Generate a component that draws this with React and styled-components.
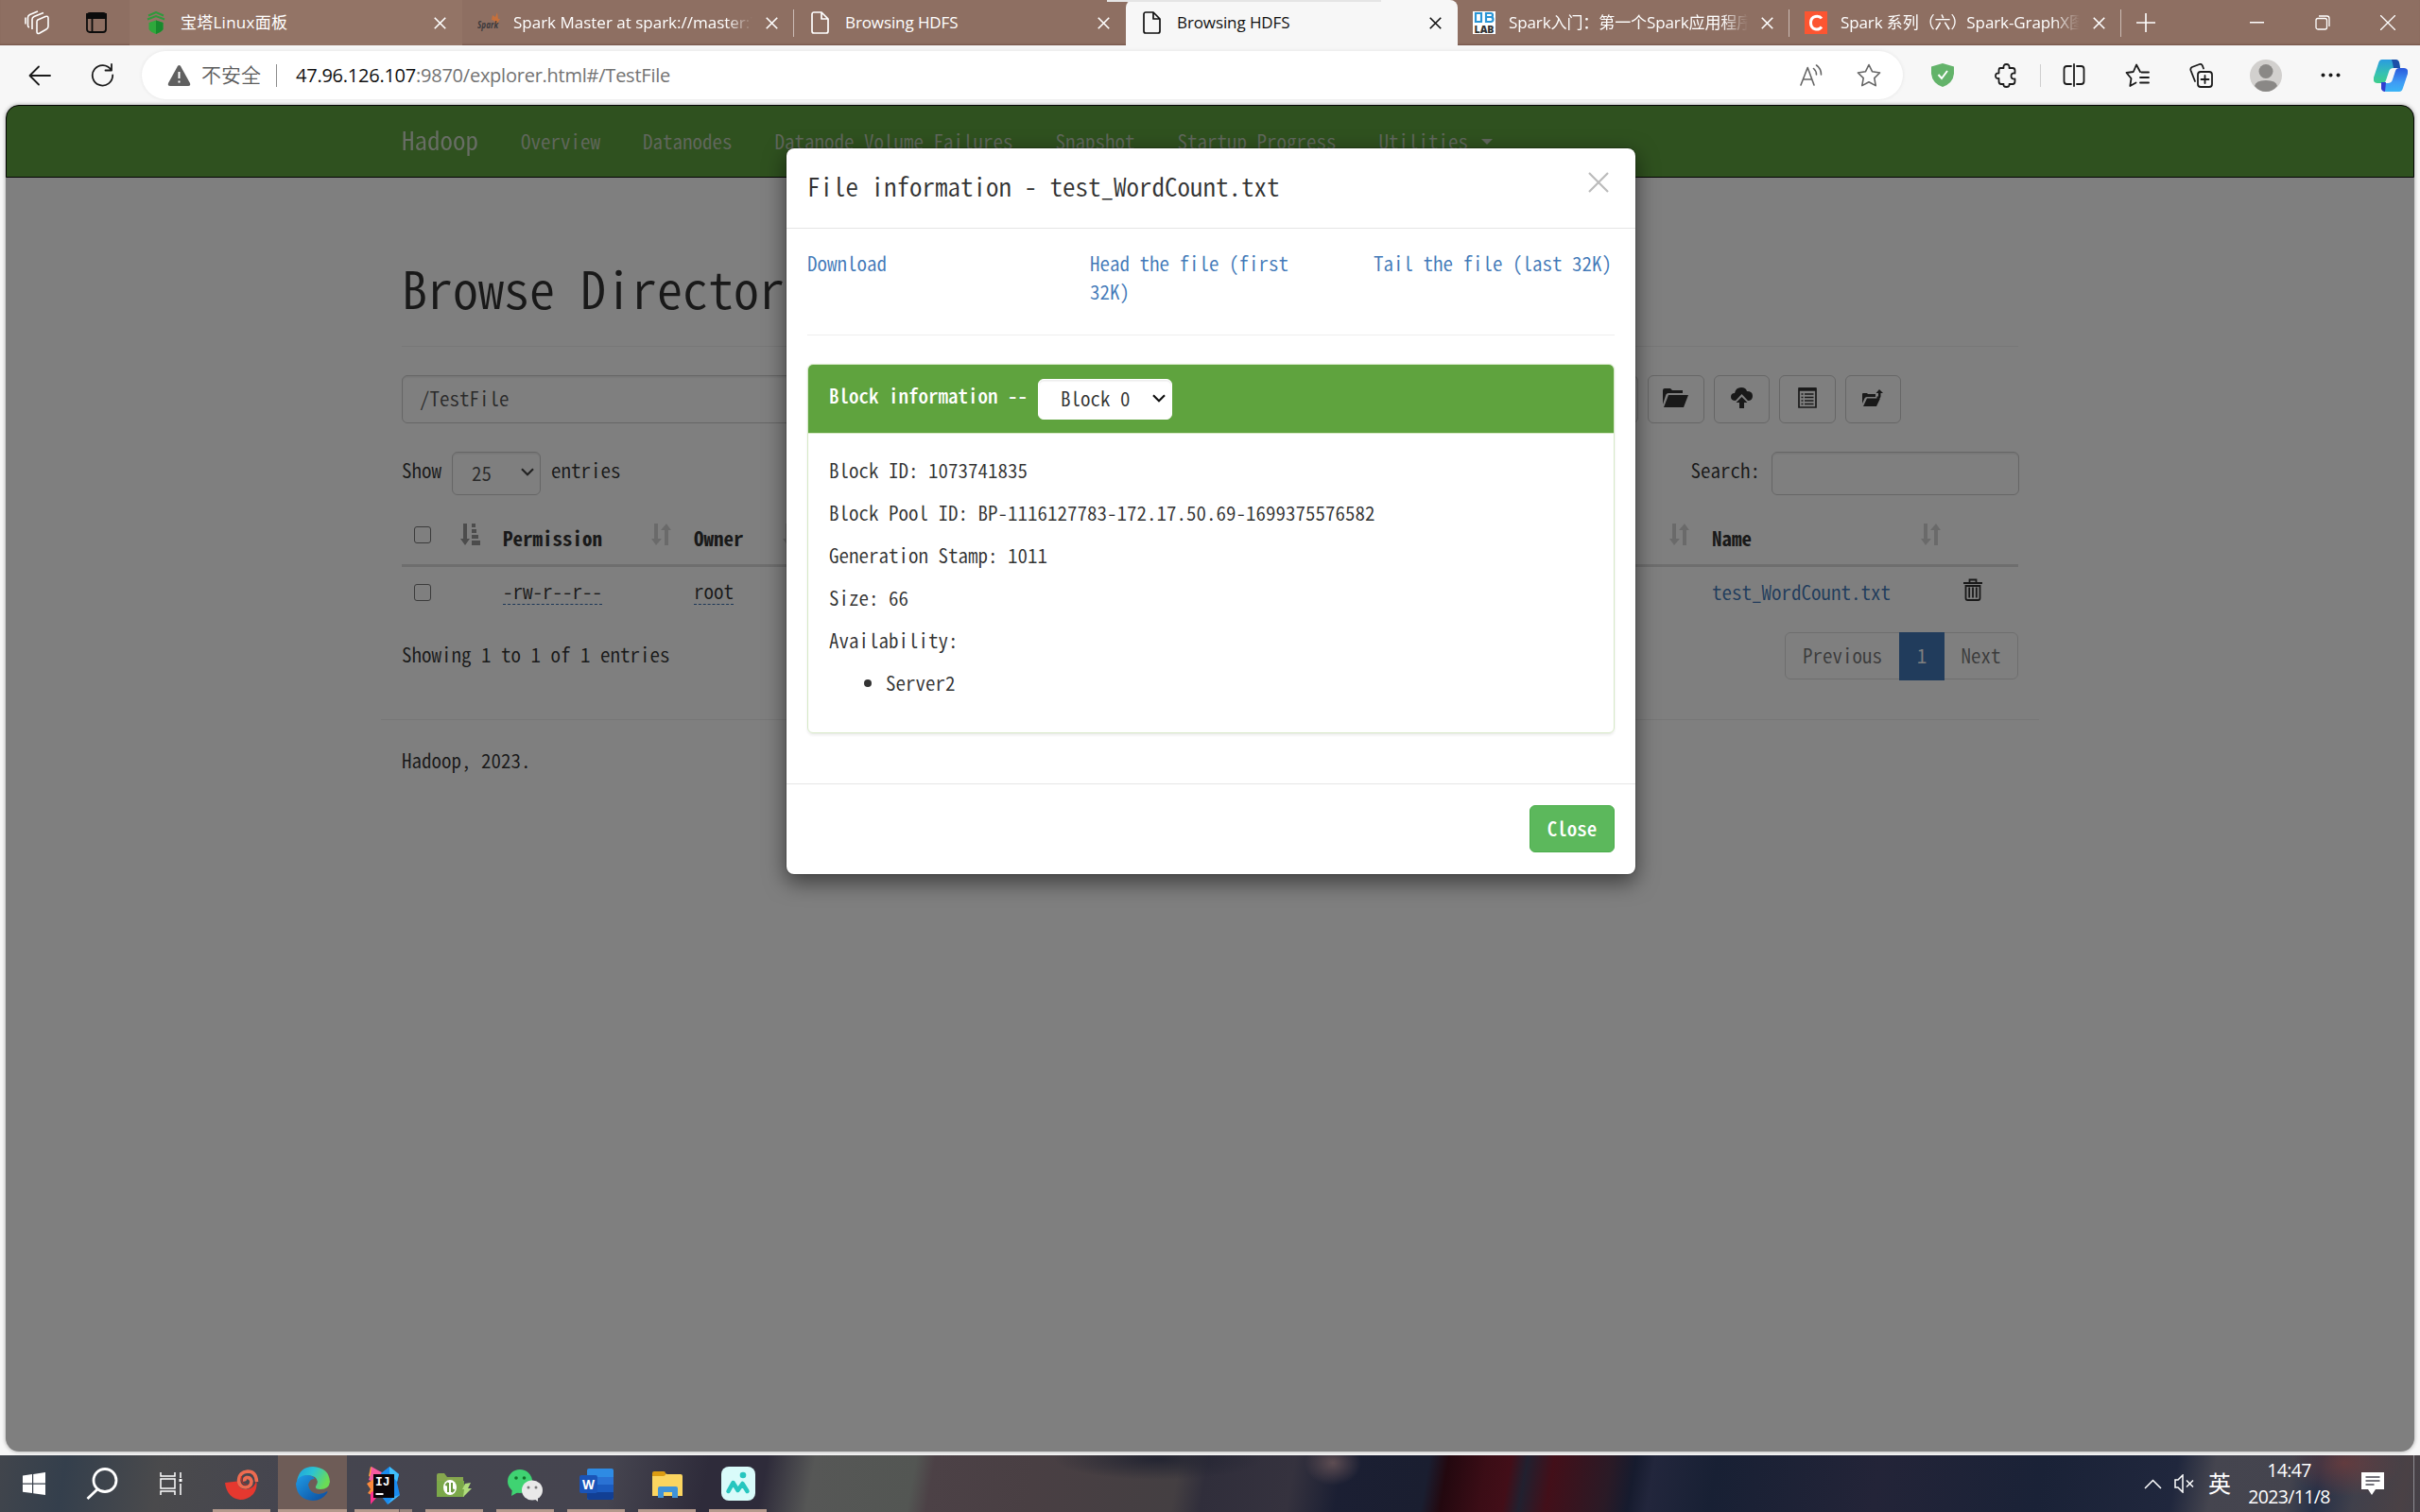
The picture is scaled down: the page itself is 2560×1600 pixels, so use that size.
import React from 'react';
import styled, { createGlobalStyle, css } from 'styled-components';

const Global = createGlobalStyle`
  * { box-sizing: border-box; }
  html, body { margin: 0; padding: 0; background: #f7f7f7; }
  #root { width: 2560px; height: 1600px; overflow: hidden; }
`;

const uiFont = css`font-family: "Open Sans", "Noto Sans CJK SC", sans-serif;`;

const Screen = styled.div`
  width: 2560px; height: 1600px; display: flex; flex-direction: column; overflow: hidden;
  ${uiFont}
`;

/* ---------- tab strip ---------- */
const TabStrip = styled.div`
  height: 48px; flex: none; display: flex; align-items: stretch; background: #8e6f62; color: #fff;
  position: relative; box-shadow: inset 0 -2px 2px -1px rgba(70,30,20,.35);
`;
const StripButton = styled.div`
  width: ${p => p.$w}px; display: flex; align-items: center; justify-content: center;
  padding-right: ${p => p.$pr || 0}px;
`;
const Tab = styled.div`
  width: ${p => p.$w || 351}px; flex: none; display: flex; align-items: center; padding: 0 17px 0 16px; position: relative;
  background: ${p => (p.$active ? '#f7f7f7' : p.$light ? '#937466' : 'transparent')};
  color: ${p => (p.$active ? '#111' : '#fff')};
  border-radius: ${p => (p.$active ? '8px 8px 0 0' : '0')};
`;
const TabIcon = styled.div`width: 24px; height: 26px; margin-right: 14px; flex: none; display: flex; align-items: center; justify-content: center;`;
const TabTitle = styled.div`
  width: 253px; flex: none; font-size: 17px; letter-spacing: ${p => p.$ls ?? -0.1}px; white-space: nowrap; overflow: hidden; line-height: 28px;
  ${p => p.$fade && css`mask-image: linear-gradient(90deg, #000 calc(100% - 28px), transparent);`}
`;
const TabClose = styled.svg`margin-left: auto; flex: none;`;
const Divider = styled.div`width: 1px; height: ${p => p.$h}px; background: ${p => p.$c}; flex: none; align-self: center;`;
const TabDivider = styled(Divider)`position: absolute; right: 0; top: 10px;`;
const LoadHint = styled.div`position: absolute; left: 1171px; top: 0; width: 290px; height: 2px; background: #e5e5e5;`;
const WindowButtons = styled.div`margin-left: auto; display: flex;`;

/* ---------- address bar ---------- */
const Toolbar = styled.div`
  height: 63px; flex: none; background: #f7f7f7; display: flex; align-items: center; position: relative;
`;
const ToolButton = styled.div`width: ${p => p.$w}px; flex: none; display: flex; align-items: center; justify-content: center;`;
const AddressPill = styled.div`
  width: 1863px; height: 51px; flex: none; background: #fff; border-radius: 26px; display: flex; align-items: center;
  padding: 0 3px 0 27px; box-shadow: 0 0 4px rgba(0,0,0,.08);
`;
const Insecure = styled.span`font-family: "Noto Sans CJK SC", sans-serif; font-weight: 350; font-size: 21px; color: #5c5c5c; margin: 0 16px 0 11px; line-height: 28px; padding-bottom: 3px;`;
const Url = styled.span`font-size: 20px; letter-spacing: -0.24px; color: #737373; margin-left: 20px; flex: 1; line-height: 30px; b { font-weight: 400; color: #111; }`;

/* ---------- page ---------- */
const PageFrame = styled.div`height: 1429px; flex: none; padding: 0 6px 4px; background: #f7f7f7;`;
const Viewport = styled.div`
  height: 1425px; border-radius: 14px; overflow: hidden; position: relative; background: #fff;
  font-family: "Noto Sans CJK JP", monospace; font-feature-settings: "hwid"; font-variant-ligatures: none; font-weight: 350;
  font-size: 21px; line-height: 30px; color: #333;
  box-shadow: 0 0 4px rgba(0,0,0,.35);
`;
const NavBar = styled.nav`
  height: 77px; background: #5fa33e; border: 1.5px solid #080808; border-radius: 14px 14px 0 0;
  display: flex; align-items: center; padding: 0 0 4px 418px; color: #d2d2d2;
`;
const Brand = styled.span`font-size: 27px; margin-right: 45px; color: #e4e4e4; opacity: .85;`;
const NavItem = styled.span`margin-right: 45px; display: flex; align-items: center; gap: 14px; color: #c3cfbc; padding-top: 2px;`;
const Caret = styled.i`border: 6px solid transparent; border-top-color: currentColor; border-bottom: 0; margin-top: 3px;`;

const Container = styled.main`width: 1710px; margin: 0 auto; display: flex; flex-direction: column;`;
const PageTitle = styled.h1`
  font-size: 54px; font-weight: inherit; line-height: 60px; margin: 86px 0 0; padding-bottom: 32px;
  border-bottom: 1.5px solid #eee; box-sizing: content-box; height: 60px; color: #333;
`;
const PathRow = styled.div`display: flex; gap: 10px; margin-top: 30px;`;
const inputBox = css`border: 1.5px solid #ccc; border-radius: 6px; background: #fff; box-shadow: inset 0 1.5px 1.5px rgba(0,0,0,.08); color: #555;`;
const PathInput = styled.div`${inputBox} width: 1308px; height: 51px; padding: 0 18px; line-height: 46px;`;
const IconButton = styled.button`
  width: 59.5px; height: 51px; padding: 0 0 3px; border: 1.5px solid #ccc; border-radius: 6px; background: #fff; display: flex; align-items: center; justify-content: center; color: #333;
`;
const ControlsRow = styled.div`display: flex; justify-content: space-between; margin-top: 30px; height: 46px;`;
const Control = styled.div`display: flex; gap: ${p => p.$gap}px; line-height: 38px; margin-right: -1px;`;
const SelectBox = styled.div`
  ${inputBox} width: ${p => p.$w}px; height: ${p => p.$h}px; padding: 0 6px 3px ${p => p.$pl}px; display: flex; align-items: center; justify-content: space-between;
  border-color: ${p => p.$bc || '#ccc'}; color: ${p => p.$c || '#555'}; font-weight: 350;
`;
const SearchInput = styled.div`${inputBox} width: 262px; height: 46px;`;

const columns = css`display: grid; grid-template-columns: 50px 45px 202px 139px 1fr 266px 70px;`;
const HeadRow = styled.div`${columns} height: 76px; border-bottom: 3px solid #ddd; font-weight: 700; padding-top: 20px;`;
const BodyRow = styled.div`${columns} height: 56px; padding-top: 12px;`;
const Cell = styled.div`padding: 0 12px; display: flex; justify-content: space-between; align-items: flex-start;`;
const HeadLabel = styled.span`padding-top: 10px;`;
const Sort = styled.svg`margin: 10px 0 0 auto; flex: none; opacity: ${p => (p.$on ? 0.5 : 0.2)};`;
const CheckBox = styled.i`width: 18px; height: 18px; border: 1.5px solid #767676; border-radius: 3px; margin: ${p => p.$mt}px 0 0 1px;`;
const Editable = styled.span`border-bottom: 1.5px dashed #3a6fae; line-height: 23px; padding-bottom: 2px; margin-top: 2px;`;
const FileLink = styled.span`color: #4279b8; margin-top: -1px;`;
const FootRow = styled.div`display: flex; justify-content: space-between; height: 105px; padding-top: 13px;`;
const Pager = styled.div`display: flex; height: 50px; border: 1.5px solid #ddd; border-radius: 6px; color: #777; line-height: 46px;`;
const PageCell = styled.span`
  width: ${p => p.$w}px; text-align: center;
  ${p => p.$on && css`background: #4279b8; color: #fff; margin: -1.5px 0; line-height: 49px;`}
`;
const Rule = styled.hr`border: 0; border-top: 1.5px solid #eee; margin: 0 ${p => p.$out || 0}px; width: auto;`;
const Copyright = styled.p`margin: 27px 0 0;`;
const Info = styled.span`padding-top: 8px;`;

/* ---------- modal ---------- */
const Backdrop = styled.div`position: absolute; inset: 0; background: rgba(0,0,0,.5);`;
const Modal = styled.section`
  position: absolute; left: 825px; top: 45px; width: 900px; height: 770px; background: #fff; background-clip: padding-box;
  border: 1.5px solid rgba(0,0,0,.2); border-radius: 9px; box-shadow: 0 7.5px 22.5px rgba(0,0,0,.5); display: flex; flex-direction: column;
`;
const ModalHead = styled.header`height: 85px; border-bottom: 1.5px solid #e5e5e5; padding: 21px 28px 0 22px; display: flex; justify-content: space-between; font-size: 27px; line-height: 38px;`;
const ModalClose = styled.svg`margin-top: 4px;`;
const ModalBody = styled.div`padding: 21px 22px 0; height: 587px;`;
const Links = styled.div`display: grid; grid-template-columns: 299px 300px 1fr; height: 91px; color: #4279b8;
  span:nth-child(2) { padding-right: 60px; } span:nth-child(3) { white-space: nowrap; }`;
const Panel = styled.div`margin-top: 30px; height: 391px; border: 1.5px solid #d6e9c6; border-radius: 6px; box-shadow: 0 1.5px 3px rgba(0,0,0,.08); overflow: hidden;`;
const PanelHead = styled.div`height: 73px; background: #5fa33e; border-bottom: 1.5px solid #d6e9c6; display: flex; gap: 11px; padding: 15px 22px 0; color: #fff; font-weight: 500; line-height: 35px;`;
const PanelBody = styled.div`padding: 23px 22px 0; display: flex; flex-direction: column; gap: 15px; p { margin: 0; }`;
const Servers = styled.ul`margin: 0; padding-left: 60px;`;
const ModalFoot = styled.footer`flex: 1; border-top: 1.5px solid #e5e5e5; display: flex; justify-content: flex-end; padding: 22px 22px 0;`;
const CloseButton = styled.button`
  width: 90px; height: 50px; border: 1.5px solid #4cae4c; border-radius: 6px; background: #5cb85c; color: #fff; padding: 0 0 3px;
  font: inherit; font-weight: 500; font-feature-settings: "hwid";
`;

/* ---------- taskbar ---------- */
const TaskBar = styled.div`
  height: 60px; flex: none; display: flex; color: #fff; overflow: hidden;
  background:
    radial-gradient(ellipse 30px 24px at 1410px 8px, rgba(120,95,95,.7), transparent),
    radial-gradient(ellipse 110px 22px at 1225px 4px, rgba(32,34,48,.9), transparent),
    radial-gradient(ellipse 60px 36px at 2480px 8px, rgba(110,60,60,.8), transparent),
    linear-gradient(100deg, #41454c 0, #343f4c 70px, #4a4a4c 170px, #45454f 300px, #45444f 640px, #2e2b3a 740px, #2e2b3a 800px, #565756 850px, #535653 955px,
      #4c4146 975px, #493f43 1080px, #443f42 1230px, #302e3b 1260px, #35323e 1350px, #1b1f33 1400px, #1a1e30 1490px, #23080f 1510px, #3b0d16 1550px, #420e18 1575px,
      #21202f 1592px, #430f19 1620px, #2a1a26 1680px, #161b2e 1705px, #22263c 1725px, #182034 1790px, #232438 1960px, #1a2237 2130px, #20273d 2270px, #45454f 2310px, #44444e 2390px, #263047 2420px, #40404b 2460px, #4a4145 2510px, #3d404b 2560px);
`;
const TaskItem = styled.div`
  width: ${p => p.$w || 75}px; flex: none; display: flex; flex-direction: column; align-items: center; position: relative;
  svg { margin-top: ${p => p.$mt ?? 12}px; }
`;
const Hilite = styled.div`width: 73px; height: 60px; background: #6e5c57; display: flex; flex-direction: column; align-items: center;`;
const Running = styled.i`width: ${p => p.$w || 61}px; height: 3px; margin-top: auto; flex: none; background: ${p => p.$bg || '#b4998c'};`;
const Tray = styled.div`margin-left: auto; display: flex; align-items: center;`;
const Ime = styled.span`font-family: "Noto Sans CJK SC", sans-serif; font-size: 24px; line-height: 28px; margin: 0 13px 2px 13px;`;
const Clock = styled.div`width: 97px; text-align: center; font-size: 19.5px; line-height: 28px; letter-spacing: -0.65px; white-space: nowrap; padding-bottom: 1px;`;
const DeskEdge = styled.i`width: 1px; height: 60px; background: #8c8c92; margin: 0 6px 0 30px;`;

const X = () => (
  <TabClose width="13" height="13" viewBox="0 0 12 12" stroke="currentColor" strokeWidth="1.5"><path d="M.7.7l10.6 10.6M11.3.7L.7 11.3" /></TabClose>
);
const PageGlyph = () => (
  <svg width="20" height="24" viewBox="0 0 20 24" fill="none" stroke="currentColor" strokeWidth="1.7" strokeLinejoin="round"><path d="M3 1h8l7 7v13a2 2 0 0 1-2 2H3a2 2 0 0 1-2-2V3a2 2 0 0 1 2-2zM11 1v7h7" /></svg>
);
const Chevron = ({ c = '#333' }) => (
  <svg width="14" height="9" viewBox="0 0 14 9" fill="none" stroke={c} strokeWidth="2.2"><path d="M1 1.2l6 6 6-6" /></svg>
);
const SortBoth = () => (
  <Sort width="21" height="23" viewBox="0 0 21 23" fill="#333"><path d="M3 0h4v16h4l-6 7-5-7h3zM14 23h4V7h3l-5-7-6 7h4z" /></Sort>
);

const tabs = [
  { w: 352, light: true, ls: 0.25, title: '宝塔Linux面板', icon: <svg width="20" height="24" viewBox="0 0 20 24"><path d="M2.500 12l7.500-2.500 7.500 2.500v7c-1 2-5 4-7.500 5-3-1-6.500-3-7.500-5z" fill="#2fa83c" /><path d="M10 9.500l7.500 2.500v7c-1 2-5 4-7.500 5z" fill="#178a2d" /><path d="M2 4.500l8-3.500 8 3.500M1 8.500l9-3.500 9 3.500" stroke="#2f9a3c" strokeWidth="2" fill="none" /></svg> },
  { title: 'Spark Master at spark://master:7077', ls: 0, fade: true, line: true, icon: <svg width="24" height="24" viewBox="0 0 24 24"><path d="M15 9l1-5 3 2 2-5 1 7 2 0-4 6-2-4z" fill="#d8702f" opacity=".75" /><text x="0" y="18" fontSize="11" fontWeight="700" fontStyle="italic" fontFamily="Open Sans" fill="#3c3a3d" textLength="22" lengthAdjust="spacingAndGlyphs">Spark</text></svg> },
  { title: 'Browsing HDFS', icon: <PageGlyph /> },
  { title: 'Browsing HDFS', active: true, icon: <PageGlyph /> },
  { title: 'Spark入门：第一个Spark应用程序', fade: true, line: true, icon: <svg width="24" height="24" viewBox="0 0 24 24"><rect width="24" height="24" fill="#fff" /><path d="M3 2h6v9M3 1v10h7M14 2h5q2 0 2 2t-2 2h-5M19 6.200q2.500 0 2.500 2.300T19 11h-5V1" fill="none" stroke="#2a95d5" strokeWidth="2.200" /><text x="1.500" y="22.500" fontSize="10" fontWeight="800" fontFamily="Open Sans" fill="#333" textLength="21" lengthAdjust="spacingAndGlyphs">LAB</text></svg> },
  { title: 'Spark 系列（六）Spark-GraphX图计算', fade: true, line: true, icon: <svg width="24" height="24" viewBox="0 0 24 24"><rect width="24" height="24" fill="#fc5531" /><path d="M18 7.500C15.500 4 6.500 4 6.500 12s8.500 8.500 11.500 4.500" stroke="#fff" strokeWidth="3" fill="none" /></svg> },
];

const s = { fill: 'none', stroke: '#1b1b1b', strokeWidth: 1.8, strokeLinejoin: 'round', strokeLinecap: 'round' };

export default function App() {
  return (
    <Screen>
      <Global />
      <TabStrip>
        <StripButton $w={78} $pr={1}><svg width="26" height="26" viewBox="0 0 26 26" fill="none" stroke="#fff" strokeWidth="1.6" strokeLinejoin="round"><path d="M14 10l8-3.500q3-1 3 1.500v9q0 2-2 3l-7 4q-3 1.500-3-1.500V12q0-1.300 1-2zM8 20V9.500q0-2 2-3L20 2.500M5 18q-1.500-.5-1.500-2V7.500q0-2 2-3L14 1M1 14.500V7.500" /></svg></StripButton>
        <StripButton $w={59} $pr={11}><svg width="22" height="22" viewBox="0 0 22 22" fill="none" stroke="#0c0c0c" strokeWidth="1.8"><rect x="1" y="1" width="20" height="20" rx="3" /><path d="M1 2h20v4H1z" fill="#0c0c0c" /><path d="M6.500 6v15" /></svg></StripButton>
        {tabs.map((t, i) => (
          <Tab key={i} $w={t.w} $active={t.active} $light={t.light}>
            <TabIcon>{t.icon}</TabIcon>
            <TabTitle $fade={t.fade} $ls={t.ls}>{t.title}</TabTitle>
            <X />
            {t.line && <TabDivider $h={29} $c="#cbbcb5" />}
          </Tab>
        ))}
        <StripButton $w={54} $pr={3}><svg width="20" height="20" viewBox="0 0 20 20" stroke="#fff" strokeWidth="1.6"><path d="M10 0v20M0 10h20" /></svg></StripButton>
        <WindowButtons>
          <StripButton $w={69}><svg width="15" height="2"><rect width="15" height="1.500" fill="#fff" /></svg></StripButton>
          <StripButton $w={69}><svg width="16" height="16" viewBox="0 0 16 16" fill="none" stroke="#fff" strokeWidth="1.3"><rect x="1" y="3.500" width="11.500" height="11.500" rx="2" /><path d="M4 1h8.500Q15 1 15 3.500V12" /></svg></StripButton>
          <StripButton $w={69}><svg width="16" height="16" viewBox="0 0 16 16" stroke="#fff" strokeWidth="1.3"><path d="M0 0l16 16M16 0L0 16" /></svg></StripButton>
        </WindowButtons>
        <LoadHint />
      </TabStrip>

      <Toolbar>
        <ToolButton $w={84}><svg width="24" height="22" viewBox="0 0 24 22" {...s}><path d="M23 11H1.500M11 1.500L1.500 11l9.500 9.500" /></svg></ToolButton>
        <ToolButton $w={48}><svg width="25" height="25" viewBox="0 0 25 25" {...s}><path d="M21.500 7A10.700 10.700 0 1 0 23.200 12.500M22 1v6.500h-6.500" /></svg></ToolButton>
        <ToolButton $w={18} />
        <AddressPill>
          <svg width="25" height="24" viewBox="0 0 25 24"><path d="M12.500 1q1 0 1.700 1.200L24 20q1 3-2 3H3q-3 0-2-3L10.800 2.200Q11.500 1 12.500 1z" fill="#606060" /><path d="M12.500 8v7M12.500 17.500v2" stroke="#fff" strokeWidth="2" /></svg>
          <Insecure>不安全</Insecure>
          <Divider $h={24} $c="#8c8c8c" />
          <Url><b>47.96.126.107</b>:9870/explorer.html#/TestFile</Url>
          <ToolButton $w={56}><svg width="25" height="24" viewBox="0 0 25 24" {...s} stroke="#666" strokeWidth="1.600"><path d="M1 22L8.200 3.500 15 22M3.500 16h9M14.500 4.500q3 2.500 3 6.500M17.500 1q5 3.500 5 10" /></svg></ToolButton>
          <ToolButton $w={66}><svg width="26" height="25" viewBox="0 0 26 25" {...s} stroke="#666" strokeWidth="1.600"><path d="M13 1.500l3.600 7.300 8 1.200-5.800 5.600 1.400 8L13 19.800l-7.200 3.800 1.400-8L1.400 10l8-1.200z" /></svg></ToolButton>
        </AddressPill>
        <ToolButton $w={84}><svg width="24" height="25" viewBox="0 0 24 25"><path d="M12 0l12 3.500V11q-1 10-12 14Q1 21 0 11V3.500z" fill="#63b36a" /><path d="M7.500 12l3.500 4 6-8" stroke="#fff" strokeWidth="2" fill="none" /></svg></ToolButton>
        <ToolButton $w={51}><svg width="25" height="26" viewBox="0 0 25 26" {...s}><path d="M6 5h3.500q-.5-4 3-4t3 4H19q2.500 0 2.500 2.500V10.500q-4-.5-4 3t4 3V19q0 3-2.500 3h-3.500q.5 3-3 3t-3-3H7Q4.500 22 4.500 19v-3q-3.500.5-3.500-2.700t3.500-2.800V7.500Q4.500 5 6 5z" /></svg></ToolButton>
        <ToolButton $w={21}><Divider $h={24} $c="#cfcfcf" /></ToolButton>
        <ToolButton $w={49}><svg width="24" height="25" viewBox="0 0 24 25" {...s}><path d="M9 3H4.500Q1.500 3 1.500 6v13q0 3 3 3H9M15 3h4.500q3 0 3 3v13q0 3-3 3H15M12 1v23" /></svg></ToolButton>
        <ToolButton $w={86}><svg width="26" height="26" viewBox="0 0 26 26" {...s}><path d="M16 9l-4-7.500L8.800 9 1.500 10l5 6-1.200 8 6.200-3.500M17.500 9.500h7.500M16 15h9M16 20.500h9" /></svg></ToolButton>
        <ToolButton $w={48}><svg width="25" height="26" viewBox="0 0 25 26" {...s}><rect x="9" y="9" width="15" height="16" rx="3" /><path d="M16.500 13v8M12.500 17h8M6 19L1.500 7.500q-.7-2.500 1.300-3.500l8-3q2-.7 3 1.300L15 5.500" /></svg></ToolButton>
        <ToolButton $w={90}><svg width="34" height="34" viewBox="0 0 34 34"><circle cx="17" cy="17" r="17" fill="#d2d0ce" /><circle cx="17" cy="12.500" r="7.500" fill="#8a8886" /><path d="M5 28q1-6 12-6t12 6q-5 6-12 6T5 28z" fill="#8a8886" /></svg></ToolButton>
        <ToolButton $w={47}><svg width="22" height="5" fill="#1b1b1b"><circle cx="2.500" cy="2.500" r="2" /><circle cx="10.500" cy="2.500" r="2" /><circle cx="18.500" cy="2.500" r="2" /></svg></ToolButton>
        <ToolButton $w={80}><svg width="36" height="34" viewBox="0 0 36 34">
          <defs>
            <linearGradient id="ca" x1="0" y1="0" x2="0" y2="1"><stop offset="0" stopColor="#2a9be0" /><stop offset=".6" stopColor="#36c2b0" /><stop offset="1" stopColor="#3fce8c" /></linearGradient>
            <linearGradient id="cb" x1="0" y1="0" x2="0" y2="1"><stop offset="0" stopColor="#2a58dc" /><stop offset=".6" stopColor="#3f9bf5" /><stop offset="1" stopColor="#3ab4f5" /></linearGradient>
          </defs>
          <path d="M9 0h14q3 0 4 3l1 6h-7q-4 0-5 4l-3 9q-1 3-4 3H4q-5 0-4-6L5 4q1-4 4-4z" fill="url(#ca)" />
          <path d="M27 34H13q-3 0-4-3l-1-6h7q4 0 5-4l3-9q1-3 4-3h5q5 0 4 6l-5 15q-1 4-4 4z" fill="url(#cb)" />
          <path d="M19 0h4q3 0 4 3l1 6h-7q-1-6-2-9z" fill="#1b4fa8" />
          <path d="M8 24h5l-1 10q-3 0-4-3z" fill="#2f3fd0" />
        </svg></ToolButton>
      </Toolbar>

      <PageFrame>
        <Viewport>
          <NavBar>
            <Brand>Hadoop</Brand>
            <NavItem>Overview</NavItem>
            <NavItem>Datanodes</NavItem>
            <NavItem>Datanode Volume Failures</NavItem>
            <NavItem>Snapshot</NavItem>
            <NavItem>Startup Progress</NavItem>
            <NavItem>Utilities <Caret /></NavItem>
          </NavBar>
          <Container>
            <PageTitle>Browse Directory</PageTitle>
            <PathRow>
              <PathInput>/TestFile</PathInput>
              <IconButton><svg width="27" height="20" viewBox="0 0 27 20" fill="#333"><path d="M0 17V2q0-2 2-2h6l2 2h11v3H6q-2 0-2.600 1.500zM1 20L6 7h21l-5 13z" /></svg></IconButton>
              <IconButton><svg width="23" height="22" viewBox="0 0 23 22" fill="#333"><path d="M5 14q-5 0-5-4t4-4q1-6 7-6 5 0 6 4 6 0 6 5t-5 5l-6.500-7z" /><path d="M11.500 10l6 6h-3.500v6H9v-6H5.500z" /></svg></IconButton>
              <IconButton><svg width="20" height="22" viewBox="0 0 20 22" fill="none" stroke="#333" strokeWidth="1.700"><path d="M1 1h18v20H1z" /><path d="M1 2h18" strokeWidth="3.500" /><path d="M3.500 7h2M7 7h9.500M3.500 10.500h2M7 10.500h9.500M3.500 14h2M7 14h9.500M3.500 17.500h2M7 17.500h9.500" /></svg></IconButton>
              <IconButton><svg width="22" height="18" viewBox="0 0 22 18" fill="#333"><path d="M0 15V5q0-1 1-1h4l1 1h8v3H5q-2 0-2.500 1.500zM1 18l4-8.500h14L15 18zM15.500 9.500v-2h1.500V4h-2.500L18 0l4 4h-2.500v3.500q0 2-2 2z" /></svg></IconButton>
            </PathRow>
            <ControlsRow>
              <Control $gap={11}>Show <SelectBox $w={94} $h={46} $pl={20}>25 <Chevron c="#444" /></SelectBox> entries</Control>
              <Control $gap={12}>Search: <SearchInput /></Control>
            </ControlsRow>
            <HeadRow>
              <Cell><CheckBox $mt={13} /></Cell>
              <Cell><Sort $on width="21" height="23" viewBox="0 0 21 23" fill="#333"><path d="M3 0h4v16h3l-5 7-5-7h3zM12 0h4v4h-4zM12 6h5v4h-5zM12 12h7v4h-7zM12 18h9v5h-9z" /></Sort></Cell>
              <Cell><HeadLabel>Permission</HeadLabel><SortBoth /></Cell>
              <Cell><HeadLabel>Owner</HeadLabel><SortBoth /></Cell>
              <Cell><SortBoth /></Cell>
              <Cell><HeadLabel>Name</HeadLabel><SortBoth /></Cell>
              <Cell />
            </HeadRow>
            <BodyRow>
              <Cell><CheckBox $mt={6} /></Cell>
              <Cell />
              <Cell><Editable>-rw-r--r--</Editable></Cell>
              <Cell><Editable>root</Editable></Cell>
              <Cell />
              <Cell><FileLink>test_WordCount.txt</FileLink></Cell>
              <Cell><svg width="20" height="24" viewBox="0 0 20 24" fill="none" stroke="#333" strokeWidth="1.800"><path d="M0 5h20M6.500 4.500V1.500h7v3M2.500 8v13q0 2 2 2h11q2 0 2-2V8zM6.200 9.500v11M10 9.500v11M13.800 9.500v11" /></svg></Cell>
            </BodyRow>
            <FootRow>
              <Info>Showing 1 to 1 of 1 entries</Info>
              <Pager><PageCell $w={120}>Previous</PageCell><PageCell $w={48} $on>1</PageCell><PageCell $w={77}>Next</PageCell></Pager>
            </FootRow>
            <Rule $out={-22} />
            <Copyright>Hadoop, 2023.</Copyright>
          </Container>
          <Backdrop />
          <Modal>
            <ModalHead>File information - test_WordCount.txt
              <ModalClose width="22" height="22" viewBox="0 0 22 22" stroke="#bbb" strokeWidth="2.200"><path d="M1 1l20 20M21 1L1 21" /></ModalClose>
            </ModalHead>
            <ModalBody>
              <Links><span>Download</span><span>Head the file (first 32K)</span><span>Tail the file (last 32K)</span></Links>
              <Rule />
              <Panel>
                <PanelHead>Block information -- <SelectBox $w={142} $h={43} $pl={23} $bc="#fff" $c="#333">Block 0 <Chevron c="#111" /></SelectBox></PanelHead>
                <PanelBody>
                  <p>Block ID: 1073741835</p>
                  <p>Block Pool ID: BP-1116127783-172.17.50.69-1699375576582</p>
                  <p>Generation Stamp: 1011</p>
                  <p>Size: 66</p>
                  <p>Availability:</p>
                  <Servers><li>Server2</li></Servers>
                </PanelBody>
              </Panel>
            </ModalBody>
            <ModalFoot><CloseButton>Close</CloseButton></ModalFoot>
          </Modal>
        </Viewport>
      </PageFrame>

      <TaskBar>
        <TaskItem $w={72} $mt={18}><svg width="24" height="24" viewBox="0 0 24 24" fill="#fff"><path d="M0 3.500l10-1.400v9.400H0zM11.200 1.900L24 0v11.500H11.200zM0 12.700h10v9.400L0 20.700zM11.200 12.700H24V24l-12.800-1.800z" /></svg></TaskItem>
        <TaskItem $w={71} $mt={13}><svg width="34" height="34" viewBox="0 0 34 34" fill="none" stroke="#fff" strokeWidth="2.800"><circle cx="20" cy="13.500" r="12" /><path d="M12 23L1.500 33" /></svg></TaskItem>
        <TaskItem $w={75} $mt={18}><svg width="24" height="24" viewBox="0 0 24 24" fill="none" stroke="#fff" strokeWidth="1.500"><path d="M1 0v4h15V0M1 24v-4h15v4M1 7h15v10H1zM22 0v6M22 12v12" /><path d="M20.500 7h3v3h-3z" fill="#fff" stroke="none" /></svg></TaskItem>
        <TaskItem $mt={14}><svg width="36" height="34" viewBox="0 0 36 34" fill="none">
          <path d="M0 15l13-1.500q1 9 10 8.500 9-1 10-10 2 8-3 15-6 6-14 6Q2 31 0 15z" fill="#e5382f" />
          <path d="M33.500 14Q33 3 24 3q-9 1-9.500 9.500Q15 20 22 20q6-1 6-6.500-1-4.500-5-4-3 1-2 4" stroke="#ee6b50" strokeWidth="3.600" />
          <path d="M17.500 8q-1 9 6 9" stroke="#b52c26" strokeWidth="1.200" /></svg><Running /></TaskItem>
        <TaskItem><Hilite><svg width="36" height="36" viewBox="0 0 36 36">
          <defs>
            <linearGradient id="ea" x1="0" y1="0" x2="1" y2=".4"><stop offset="0" stopColor="#1ba0e0" /><stop offset=".5" stopColor="#2cc3d2" /><stop offset="1" stopColor="#6bdc55" /></linearGradient>
            <linearGradient id="eb" x1="0" y1="0" x2="1" y2="1"><stop offset="0" stopColor="#1f9be6" /><stop offset="1" stopColor="#0c4a9c" /></linearGradient>
          </defs>
          <path d="M1 15Q4 0 18 0q17 1 18 16-1 8-10 8-6 0-5-3 4-6-1-10Q10 6 1 15z" fill="url(#ea)" /><path d="M0 18Q2 9 12 9q6 0 8 4-5-1-7 6 1 9 11 10 5 0 9-3 1 0 0 2-6 8-15 8Q1 35 0 18z" fill="url(#eb)" /></svg><Running $w={73} /></Hilite></TaskItem>
        <TaskItem><svg width="36" height="41" viewBox="0 0 36 41"><path d="M4 0l8 5-2 8-8-3z" fill="#fba33a" /><path d="M5 0l7 4 6 3-3 12L2 14l2-6z" fill="#f75aa0" /><path d="M0 18l9-6v20l-8-4 3-4z" fill="#fb8a3c" /><path d="M4 28l5-4 9 6-8 3-6 7z" fill="#fc2f8e" /><path d="M15 7l9-7 10 8-2 9 3 13-13 10-6-8z" fill="#1a8cf0" /><path d="M24 0l10 8-2 8-8-9z" fill="#3fc0fa" /><path d="M22 40l6-8 7-2z" fill="#3fb6fa" /><rect x="7" y="8" width="22" height="25" fill="#0a0508" /><text x="9" y="20" fontSize="13" fontWeight="700" fontFamily="Liberation Mono" fill="#fff">IJ</text><rect x="9.500" y="28" width="8" height="2" fill="#fff" /></svg><Running $bg="linear-gradient(90deg,#b4998c 47px,#64565a 47px,#64565a 48px,#9a857d 48px)" /></TaskItem>
        <TaskItem $mt={18}><svg width="37" height="27" viewBox="0 0 37 27"><path d="M0 3q0-2 2-2h6l3 4h17v21H0z" fill="#86a74e" /><path d="M0 9h29v17H0z" fill="#7ba849" /><path d="M30 12l6-1-3 6h4l-9 9 1-8h-2z" fill="#b0dc7c" /><ellipse cx="14" cy="16" rx="7" ry="8" fill="#fff" /><path d="M12 11v10M16 11v10M12 11l-2.500 3M16 21l2.500-3" stroke="#6b9a40" strokeWidth="2" fill="none" /></svg><Running /></TaskItem>
        <TaskItem $mt={15}><svg width="37" height="34" viewBox="0 0 37 34"><ellipse cx="13" cy="12.500" rx="13" ry="12.500" fill="#3fd372" /><path d="M5 20l-1 8 7-4z" fill="#3fd372" /><ellipse cx="26" cy="22" rx="11" ry="10.500" fill="#e9e9e9" /><path d="M27 30l5 4v-6z" fill="#e9e9e9" /><circle cx="9" cy="9" r="1.800" fill="#12742c" /><circle cx="17.500" cy="9" r="1.800" fill="#12742c" /><circle cx="22" cy="19" r="1.500" fill="#777" /><circle cx="30" cy="19" r="1.500" fill="#777" /></svg><Running /></TaskItem>
        <TaskItem $mt={14}><svg width="36" height="33" viewBox="0 0 36 33"><rect x="8" width="28" height="33" rx="2" fill="#2e8be4" /><path d="M8 9h28v8H8z" fill="#2a72d4" /><path d="M8 17h28v8H8z" fill="#1b5bbf" /><path d="M8 25h28v6q0 2-2 2H10q-2 0-2-2z" fill="#123f94" /><rect y="7" width="19" height="19" rx="2" fill="#1a54b8" /><text x="3" y="21.500" fontSize="14" fontWeight="700" fontFamily="Open Sans" fill="#fff" textLength="13" lengthAdjust="spacingAndGlyphs">W</text></svg><Running /></TaskItem>
        <TaskItem $mt={17}><svg width="32" height="28" viewBox="0 0 32 28"><path d="M0 2h13l3 1h14q2 0 2 2v21H0z" fill="#fbd560" /><path d="M0 2q0-2 2-2h10q2 0 2 2v2l-2 1H0z" fill="#dc9c12" /><path d="M6 28V18q0-2 2-2h17q2 0 2 2v10h-6v-6h-9v6z" fill="#3f93d9" /></svg><Running /></TaskItem>
        <TaskItem><svg width="36" height="36" viewBox="0 0 36 36"><rect width="36" height="36" rx="8" fill="#d9fbfa" /><path d="M7.500 26l5-9 5 8 5-7 5 8" stroke="#26c6bf" strokeWidth="4.500" fill="none" strokeLinecap="round" strokeLinejoin="round" /><circle cx="23" cy="9" r="3.300" fill="#26c6bf" /></svg><Running /></TaskItem>
        <Tray>
          <svg width="19" height="11" viewBox="0 0 19 11" fill="none" stroke="#fff" strokeWidth="1.500"><path d="M1 10l8.500-8.500L18 10" /></svg>
          <svg width="36" height="20" viewBox="-13 0 36 20" fill="none" stroke="#fff" strokeWidth="1.500"><path d="M1 6h3l5-5v18l-5-5H1zM13 6.500l7 7M20 6.500l-7 7" /></svg>
          <Ime>英</Ime>
          <Clock>14:47<br />2023/11/8</Clock>
          <svg width="53" height="26" viewBox="-28 0 53 26"><path d="M0 1h24v18h-9l-4 6-4-6H0z" fill="#fff" /><path d="M4.500 6h15M4.500 10h15M4.500 14h9" stroke="#474650" strokeWidth="1.300" /></svg>
          <DeskEdge />
        </Tray>
      </TaskBar>
    </Screen>
  );
}
